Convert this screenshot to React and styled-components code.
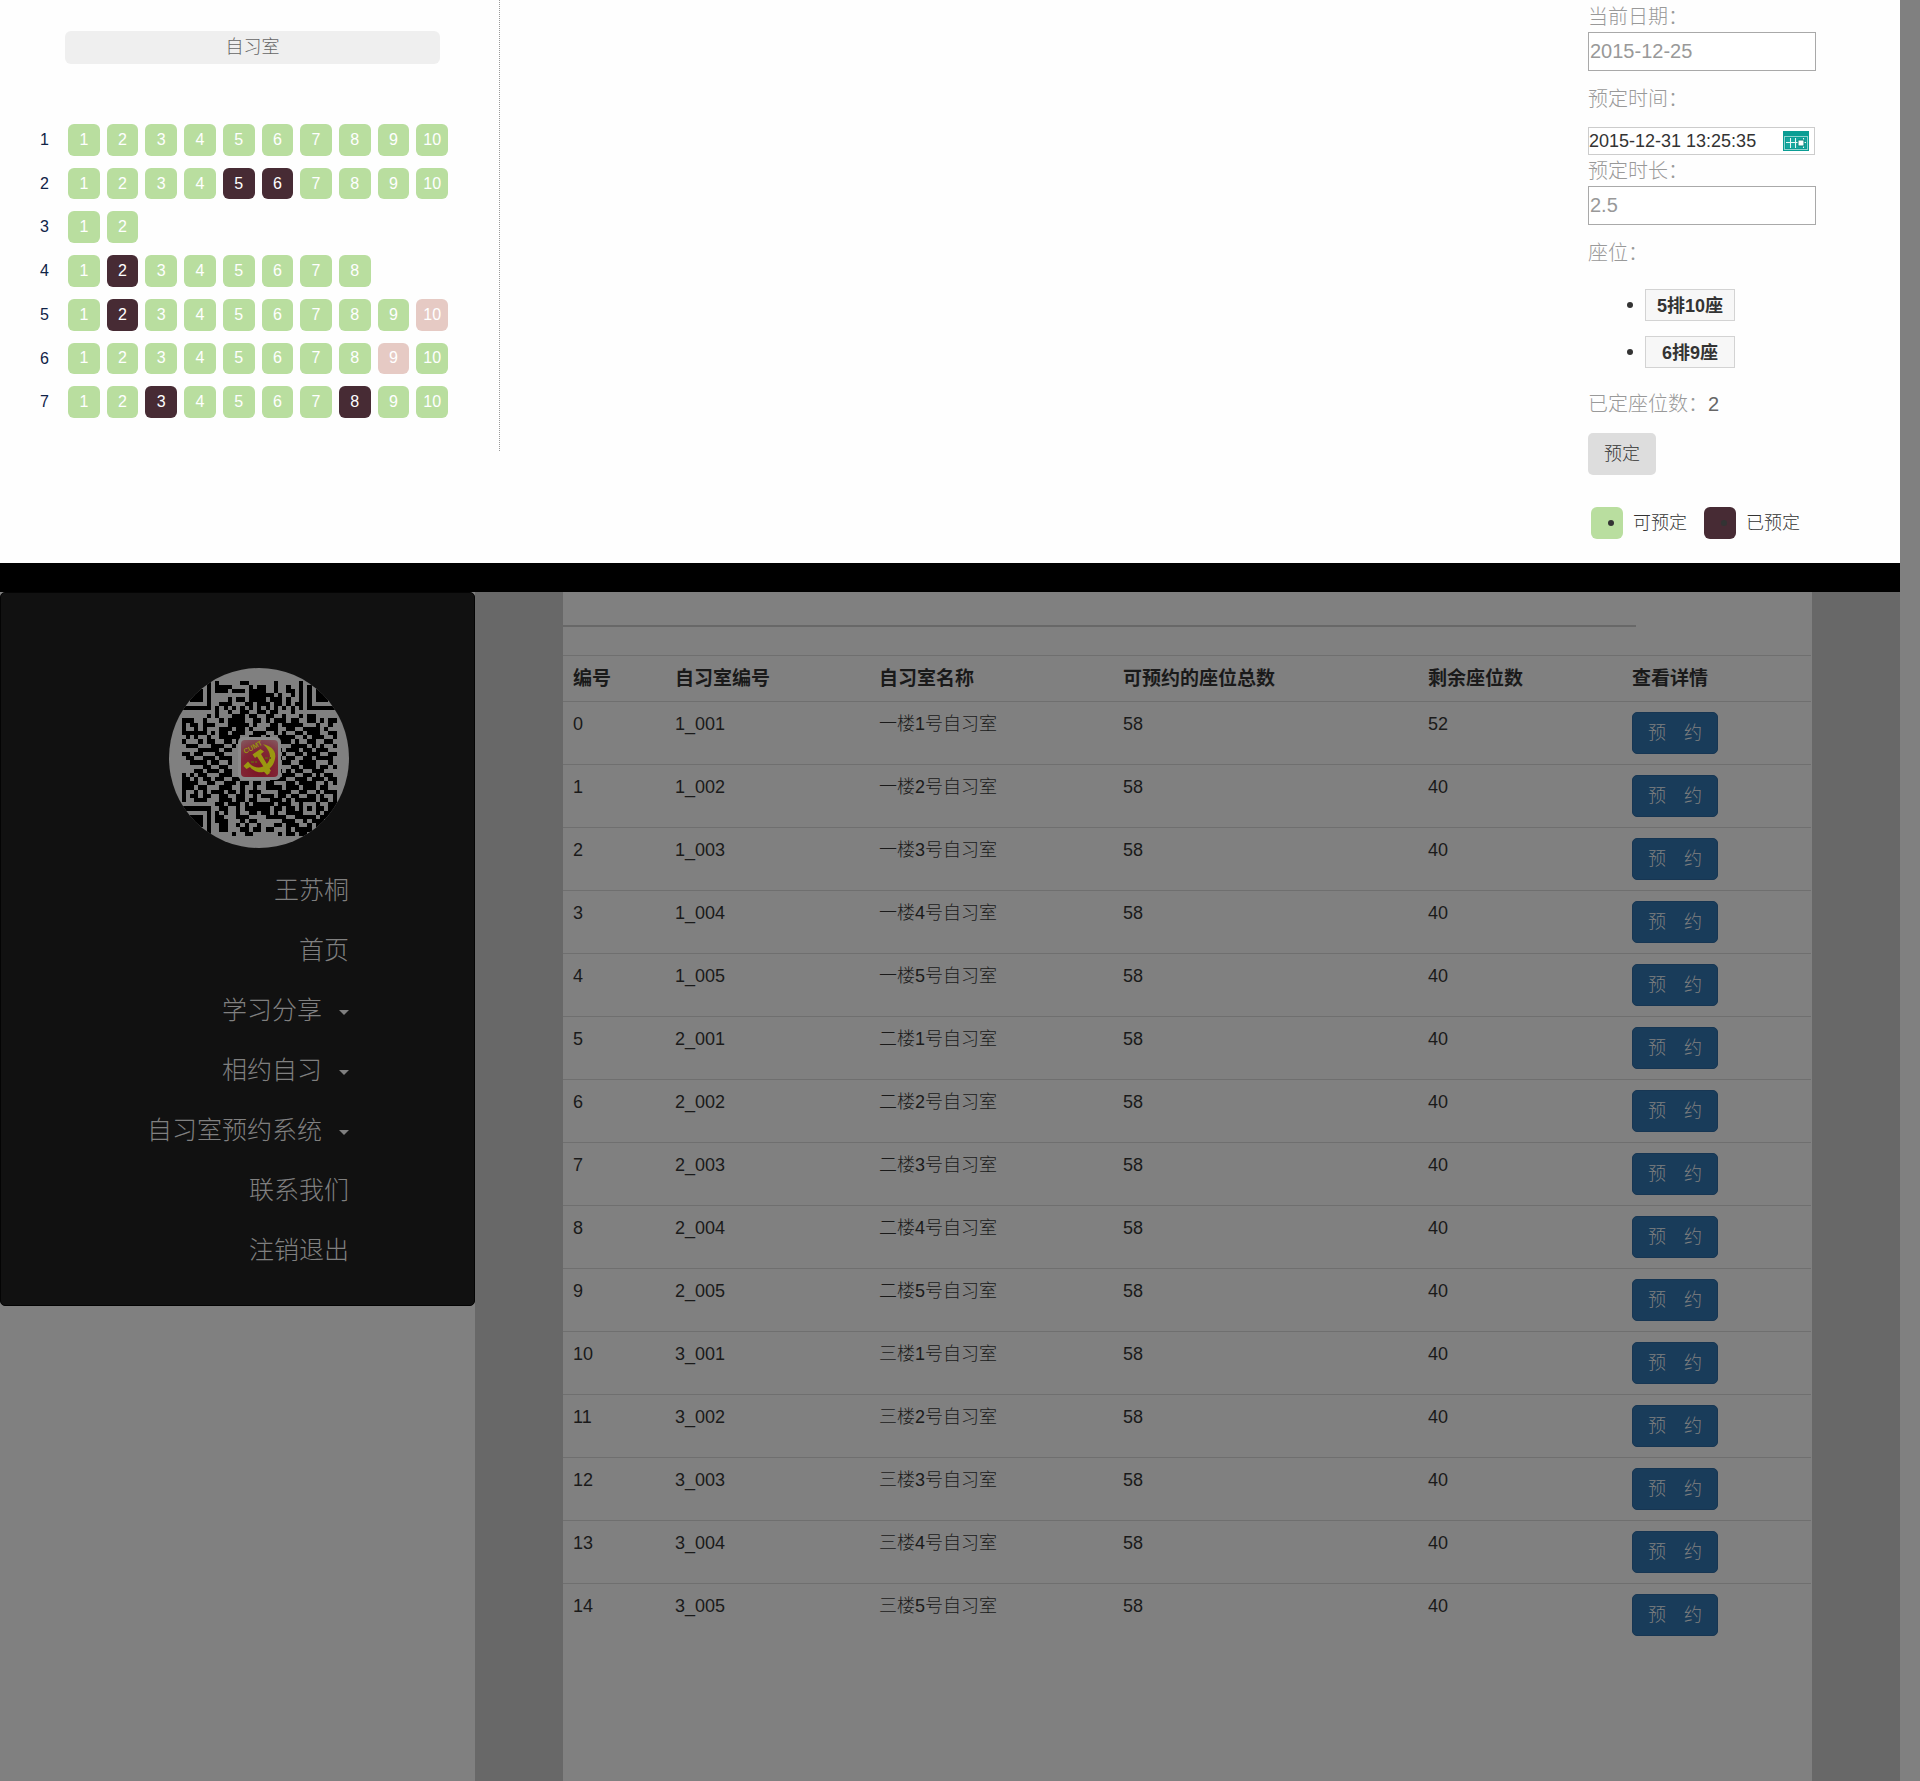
import React, { useState } from 'react';
import styled, { createGlobalStyle, css } from 'styled-components';

const GlobalStyle = createGlobalStyle`
  *, *::before, *::after { box-sizing: border-box; }
  body {
    margin: 0;
    background: #808080;
    color: #333;
    font-family: "Liberation Sans", "Noto Sans CJK SC", sans-serif;
    font-size: 18px;
    font-weight: 300;
    line-height: 25px;
  }
  button, input { font: inherit; }
  button { cursor: pointer; }
`;

const Page = styled.div`
  display: flex;
  flex-direction: column;
  min-height: 100vh;
  padding-right: 20px;
`;

/* ---------- booking panel ---------- */

const Booking = styled.section`
  display: flex;
  justify-content: space-between;
  align-items: flex-start;
  padding-right: 84px;
  background: #fefefe;
  border-bottom: 29px solid #000;
`;

const SeatMap = styled.div`
  width: 500px;
  padding: 31px 51px 33px 40px;
  border-right: 1px dotted #999;
`;

const Screen = styled.div`
  height: 33px;
  margin: 0 8px 60px 25px;
  border-radius: 6px;
  background: #efefef;
  color: #666;
  line-height: 33px;
  text-align: center;
`;

const Rows = styled.div`
  display: grid;
  grid-auto-rows: 1fr;
  gap: 12px;
  height: 294px;
`;

const SeatRow = styled.div`
  display: grid;
  grid-template-columns: 21px repeat(10, 1fr);
  gap: 7px;
  color: #102347;
  font-size: 16px;
  line-height: 31px;
`;

const seatColors = { free: '#b9de9f', taken: '#472b34', picked: '#e6cac4' };

const seatShape = css`
  border: 0;
  border-radius: 6px;
  background: ${(p) => seatColors[p.$state]};
`;

const Seat = styled.button`
  ${seatShape}
  padding: 0;
  color: #fff;
  line-height: 30px;
`;

const Form = styled.form`
  display: flex;
  flex-direction: column;
  align-items: stretch;
  width: 228px;
  padding: 2px 0 24px;
`;

const Label = styled.label`
  color: #999;
  font-size: 20px;
  line-height: 30px;
`;

const BigInput = styled.input`
  width: 100%;
  height: 39px;
  margin-bottom: 13px;
  padding: 1px;
  border: 1px solid #a9a9a9;
  background: #fff;
  color: #999;
  font-size: 20px;
`;

const DateBox = styled.div`
  display: flex;
  align-items: center;
  height: 28px;
  margin: 13px 1px 1px 0;
  padding-right: 5px;
  border: 1px solid #ccc;
  background: #fff;
`;

const DateInput = styled.input`
  flex: 1;
  min-width: 0;
  padding: 0;
  border: 0;
  background: none;
  color: #333;
`;

const GroupTitle = styled.p`
  margin: 0;
  color: #999;
  font-size: 20px;
  line-height: 30px;
  strong { color: #666; font-weight: 400; }
`;

const Picked = styled.ul`
  display: grid;
  gap: 15px;
  margin: 21px 0;
  padding: 0 0 0 39px;
  list-style: none;
`;

const Bullet = styled.span`
  width: 6px;
  height: 6px;
  border-radius: 50%;
  background: #333;
`;

const PickedItem = styled.li`
  display: flex;
  align-items: center;
  gap: 12px;
`;

const PickedTag = styled.span`
  width: 90px;
  height: 32px;
  border: 1px solid #d3d3d3;
  background: #f7f7f7;
  font-weight: 700;
  line-height: 32px;
  text-align: center;
`;

const Submit = styled.button`
  align-self: flex-start;
  width: 68px;
  height: 42px;
  margin: 14px 0 32px;
  padding: 0;
  border: 0;
  border-radius: 5px;
  background: #ddd;
  color: #333;
`;

const Legend = styled.div`
  display: flex;
  gap: 17px;
  padding-left: 3px;
`;

const LegendItem = styled.div`
  display: flex;
  align-items: center;
  gap: 10px;
  line-height: 32px;
  white-space: nowrap;
`;

const Swatch = styled.span`
  ${seatShape}
  display: flex;
  justify-content: flex-end;
  align-items: center;
  width: 32px;
  height: 32px;
  padding-right: 9px;
`;

/* ---------- dimmed page ---------- */

const Columns = styled.div`
  display: flex;
  flex: 1;
`;

const Side = styled.div`
  width: 25%;
`;

const Nav = styled.nav`
  display: flex;
  flex-direction: column;
  align-items: flex-end;
  padding: 75px 125px 25px 0;
  border: 1px solid #040404;
  border-radius: 5px;
  background: #111;
`;

const NavLink = styled.a`
  display: flex;
  align-items: center;
  gap: 17px;
  height: 60px;
  color: #808080;
  font-size: 25px;
  text-decoration: none;
`;

const Caret = styled.span`
  margin-top: 4px;
  border: 5px solid transparent;
  border-top-color: #808080;
  border-bottom: 0;
`;

const Portrait = styled.svg`
  display: block;
  width: 180px;
  height: 180px;
  margin-bottom: 12px;
`;

const Main = styled.main`
  flex: 1;
  padding: 0 88px;
  background: #686868;
`;

const Sheet = styled.div`
  height: 100%;
  padding: 33px 1px 60px 0;
  background: #808080;
`;

const Rule = styled.hr`
  width: 86%;
  margin: 0 0 28px;
  border: 0;
  border-top: 2px solid #686868;
`;

const Table = styled.table`
  width: 100%;
  table-layout: fixed;
  border-collapse: separate;
  border-spacing: 0;
  color: #1a1a1a;
  th, td {
    padding: 10px;
    border-top: 1px solid #6f6f6f;
    text-align: left;
    vertical-align: top;
    white-space: nowrap;
  }
  th { font-size: 19px; font-weight: 700; }
`;

const Reserve = styled.button`
  display: block;
  width: 86px;
  height: 42px;
  padding: 0;
  border: 1px solid #173653;
  border-radius: 5px;
  background: #193c5a;
  color: #808080;
  white-space: pre;
`;

const seatRows = [
  { count: 10, taken: [], picked: [] },
  { count: 10, taken: [5, 6], picked: [] },
  { count: 2, taken: [], picked: [] },
  { count: 8, taken: [2], picked: [] },
  { count: 10, taken: [2], picked: [10] },
  { count: 10, taken: [], picked: [9] },
  { count: 10, taken: [3, 8], picked: [] },
];

const navItems = [
  ['王苏桐'],
  ['首页'],
  ['学习分享', true],
  ['相约自习', true],
  ['自习室预约系统', true],
  ['联系我们'],
  ['注销退出'],
];

const columnWidths = [102, 204, 244, 305, 204, 189];
const headings = ['编号', '自习室编号', '自习室名称', '可预约的座位总数', '剩余座位数', '查看详情'];

const rooms = ['一', '二', '三'].flatMap((floor, f) =>
  [1, 2, 3, 4, 5].map((n) => ({
    code: `${f + 1}_00${n}`,
    name: `${floor}楼${n}号自习室`,
    total: 58,
    left: f === 0 && n === 1 ? 52 : 40,
  }))
);

const qrRows = [
  '1111111010000011000000100000100111111',
  '1000001011110000101100100100101000001',
  '1011101011101110111100100110101011101',
  '1011101000000000111111010010101011101',
  '1011101000010110111101110100101011101',
  '1000001001110001101110110101101000001',
  '1111111010101010101010101010101111111',
  '0000000010010011001101100010000000000',
  '0000001010001110110011001000101100000',
  '1110010001011110011010111011001101011',
  '1011011100011111010001101111100010010',
  '1001010001110110100011100110011110100',
  '1111110101101110011100101001101110011',
  '0101001001111100111010011110010111001',
  '1000101100110100000001011101001100110',
  '0111000111001000000001100011110101001',
  '0000111110110000000000010111011011100',
  '1101100011000000000000001001101110011',
  '0110011101110000000000010110011011110',
  '0011110110010000000000001100111100010',
  '0000011001100000000000000011011101101',
  '0001101110110000000000010101100111000',
  '1010110001110000000000001110011010110',
  '1101011011001100000001111001110111011',
  '1111001100111011011011000110111100101',
  '1110110001110010010011110111011101100',
  '1001010111011010111000011100110010111',
  '1011011001100110010111011011001101001',
  '1001110001110110110001110101111101101',
  '0000000011011101011111011100100010011',
  '1111111001100101111110110110101011011',
  '1000001010100100110110100111100010110',
  '1011101011000111000011111001111101100',
  '1011101011100010110000001110010111010',
  '1011101001100101001000110111001011100',
  '1000001001100011011011000101111010011',
  '1111111000001001100000010110110110101',
];

const qrPath = qrRows
  .map((row, y) => [...row].map((bit, x) => (bit === '1' ? `M${x} ${y}h1v1h-1z` : '')).join(''))
  .join('');

function QrPortrait() {
  return (
    <Portrait viewBox="0 0 180 180" role="img" aria-label="二维码">
      <defs>
        <clipPath id="round"><circle cx="90" cy="90" r="90" /></clipPath>
        <radialGradient id="badge" cx="50%" cy="80%" r="90%">
          <stop offset="0" stopColor="#7c1424" />
          <stop offset="0.6" stopColor="#822636" />
          <stop offset="1" stopColor="#84555c" />
        </radialGradient>
      </defs>
      <g clipPath="url(#round)">
        <rect width="180" height="180" fill="#808080" />
        <g transform="translate(12.7 12.7) scale(4.19)">
          <path d={qrPath} shapeRendering="crispEdges" />
        </g>
        <rect x="69" y="69" width="43" height="43" rx="5" fill="#8a8a8a" />
        <rect x="72" y="72" width="37" height="37" rx="4" fill="url(#badge)" />
        <g transform="rotate(-28 76 86)">
          <text x="76" y="86" fill="#989410" fontSize="7" fontWeight="700">CUMT</text>
        </g>
        <path d="M94 76.300C101 77.500 107 82 106.300 89C105.500 96 102 100 99 101.500L101 105L98 107L95 103.700C90 105.500 84 103 81 99L77.500 101L74.500 98L79 93.500C83 99 89 101 94 98.500C102 95 104.500 85 94 76.300Z" fill="#9a9710" />
        <path d="M83.500 86.500L91.500 81L95 83.500L92 86L102 103L98.500 105L88 88.500L86 90Z" fill="#9a9710" />
        <path d="M82 94h6M96 90h6" stroke="#6e5018" strokeWidth="2" strokeDasharray="3 1" />
      </g>
    </Portrait>
  );
}

function CalendarIcon() {
  return (
    <svg width="26" height="20" viewBox="0 0 26 20" aria-hidden="true">
      <rect width="26" height="20" fill="#0a9d94" />
      <rect x="1.500" y="5.500" width="23" height="13" fill="none" stroke="#8fd3cf" />
      <rect x="3" y="7" width="20" height="10" fill="#18a79f" />
      <path d="M7.500 7v10M12.500 7v10M3 11.500h20M20.500 7v10" stroke="#e9f7f6" fill="none" />
      <path d="M15 9h6v6h-6z" fill="#fff" stroke="#0a8078" />
    </svg>
  );
}

function seatState(row, n) {
  if (row.taken.includes(n)) return 'taken';
  return row.picked.includes(n) ? 'picked' : 'free';
}

export default function App() {
  const [date, setDate] = useState('2015-12-31 13:25:35');
  const [hours, setHours] = useState('2.5');

  return (
    <Page>
      <GlobalStyle />
      <Booking>
        <SeatMap>
          <Screen>自习室</Screen>
          <Rows>
            {seatRows.map((row, i) => (
              <SeatRow key={i}>
                <span>{i + 1}</span>
                {Array.from({ length: row.count }, (_, s) => (
                  <Seat key={s} type="button" $state={seatState(row, s + 1)}>{s + 1}</Seat>
                ))}
              </SeatRow>
            ))}
          </Rows>
        </SeatMap>
        <Form onSubmit={(e) => e.preventDefault()}>
          <Label htmlFor="today">当前日期：</Label>
          <BigInput id="today" value="2015-12-25" readOnly />
          <Label htmlFor="when">预定时间：</Label>
          <DateBox>
            <DateInput id="when" value={date} onChange={(e) => setDate(e.target.value)} />
            <CalendarIcon />
          </DateBox>
          <Label htmlFor="hours">预定时长：</Label>
          <BigInput id="hours" value={hours} onChange={(e) => setHours(e.target.value)} />
          <GroupTitle>座位：</GroupTitle>
          <Picked>
            {['5排10座', '6排9座'].map((seat) => (
              <PickedItem key={seat}><Bullet /><PickedTag>{seat}</PickedTag></PickedItem>
            ))}
          </Picked>
          <GroupTitle>已定座位数：<strong>2</strong></GroupTitle>
          <Submit type="submit">预定</Submit>
          <Legend>
            <LegendItem><Swatch $state="free"><Bullet /></Swatch>可预定</LegendItem>
            <LegendItem><Swatch $state="taken"><Bullet /></Swatch>已预定</LegendItem>
          </Legend>
        </Form>
      </Booking>
      <Columns>
        <Side>
          <Nav>
            <QrPortrait />
            {navItems.map(([text, menu]) => (
              <NavLink key={text} href="#">{text}{menu && <Caret />}</NavLink>
            ))}
          </Nav>
        </Side>
        <Main>
          <Sheet>
            <Rule />
            <Table>
              <colgroup>
                {columnWidths.map((w, i) => <col key={i} style={{ width: `${(w / 1248) * 100}%` }} />)}
              </colgroup>
              <thead>
                <tr>{headings.map((h) => <th key={h} scope="col">{h}</th>)}</tr>
              </thead>
              <tbody>
                {rooms.map((room, i) => (
                  <tr key={room.code}>
                    <td>{i}</td>
                    <td>{room.code}</td>
                    <td>{room.name}</td>
                    <td>{room.total}</td>
                    <td>{room.left}</td>
                    <td><Reserve type="button">{'预\u3000约'}</Reserve></td>
                  </tr>
                ))}
              </tbody>
            </Table>
          </Sheet>
        </Main>
      </Columns>
    </Page>
  );
}
